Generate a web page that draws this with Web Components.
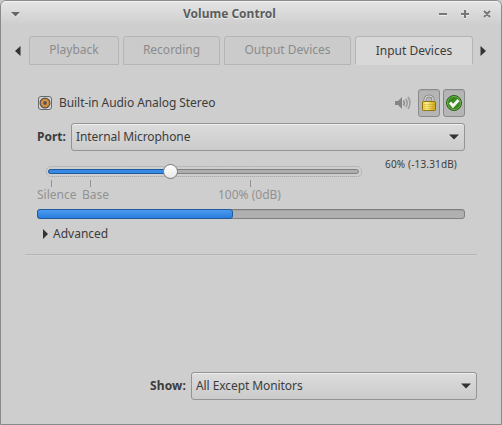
<!DOCTYPE html>
<html lang="en"><head><meta charset="utf-8"><title>Volume Control</title>
<style>
html,body{margin:0;width:502px;height:425px;overflow:hidden;background:#c9c9c9}
body{font:12px/16px "Noto Sans","Open Sans",sans-serif;color:#3c3c3c}
</style></head><body>
<volume-window></volume-window>
<script>
const define=(name,html)=>customElements.define(name,class extends HTMLElement{
  constructor(){super();this.attachShadow({mode:'open'}).innerHTML=html;}
});
define('title-bar',`<style>
:host{display:grid;grid-template-columns:172px auto 1fr;align-items:center;height:24px;padding:0 9px 0 10px;background:linear-gradient(#e4e4e4,#cecece);border-top:1px solid #f4f4f4;box-sizing:border-box;color:#5c5c5c}
b{text-shadow:0 1px #eee}
svg{display:block}.r{justify-self:end}
</style><svg width="10" height="8"><path d="M0 3h9L4.500 7.500z" fill="#f2f2f2"/><path d="M0 2h9L4.500 6.500z" fill="#666"/></svg>
<b><slot></slot></b>
<svg class="r" width="54" height="12"><g fill="none" stroke-width="2"><path stroke="#eee" d="M1 7h8M23 7h8M27 3v8M46 3.500l6 6M52 3.500l-6 6"/><path stroke="#777" d="M1 6h8M23 6h8M27 2v8M46 3l6 6M52 3l-6 6"/></g></svg>`);
define('tab-item',`<style>
:host{display:flex;box-sizing:border-box;height:29px;border:1px solid #b5b5b5;border-radius:3px 3px 0 0;align-items:center;justify-content:center;color:#8b8b8b;padding-bottom:1px;background:#cbcbcb;white-space:nowrap}
:host([active]){background:#d8d8d8;color:#3c3c3c;border-bottom-color:#d8d8d8;padding-bottom:0}
</style><slot></slot>`);
define('tab-strip',`<style>
:host{display:grid;grid-template-columns:13px 90px 97px 127px 118px 13px;column-gap:4px;padding:11px 0 0 11px;align-items:center}
svg{display:block}.l{justify-self:end;margin-right:4px}
.r{margin-left:3px}
</style><svg class="l" width="6" height="12"><path d="M5.500 1v10L0 6z" fill="#333"/></svg>
<slot></slot><svg class="r" width="6" height="12"><path d="M.5 1v10L6 6z" fill="#333"/></svg>`);
define('combo-box',`<style>
:host{display:flex;box-sizing:border-box;height:28px;border:1px solid #949494;border-radius:3px;background:linear-gradient(#dcdcdc,#cbcbcb);box-shadow:inset 0 1px #eee;align-items:center;justify-content:space-between;padding:0 5px 1px 4px;white-space:nowrap;letter-spacing:-.08px}
</style><span><slot></slot></span><svg width="10" height="6"><path d="M0 .5h10L5 5.5z" fill="#333"/></svg>`);
define('toggle-button',`<style>
:host{display:flex;box-sizing:border-box;width:22px;height:28px;border:1px solid #8a8a8a;border-radius:3px;background:#b5b5b5;box-shadow:inset 0 1px #aaa;align-items:center;justify-content:center}
</style><slot></slot>`);
define('volume-slider',`<style>
:host{display:block;width:316px;height:23px}svg{display:block;overflow:visible}
</style><svg width="316" height="23">
<defs><linearGradient id="k" x2="0" y2="1"><stop stop-color="#fff"/><stop offset="1" stop-color="#e8e8e8"/></linearGradient></defs>
<rect x=".5" y="1.5" width="315" height="10" rx="4" fill="none" stroke="#a0a0a0" stroke-dasharray="1 1"/>
<rect x="2.5" y="4.5" width="310" height="4" rx="2" fill="#adadad" stroke="#808080"/>
<path d="M124 4.5H4.5a2 2 0 0 0 0 4H124" fill="#368ae6" stroke="#1f5a9c"/>
<circle cx="124.5" cy="6.5" r="7" fill="url(#k)" stroke="#777"/>
<path d="M5.500 15v7M44.500 15v7M204.500 15v7" stroke="#929292"/></svg>`);
define('level-bar',`<style>
:host{display:block;box-sizing:border-box;height:10px;border:1px solid #808080;border-radius:3px;background:#b0b0b0;box-shadow:inset 0 1px #a2a2a2}
i{display:block;box-sizing:border-box;width:196px;height:10px;margin:-1px;border:1px solid #205a9e;border-radius:3px;background:linear-gradient(#4a9bf0,#2a7edb)}
</style><i></i>`);
define('device-card',`<style>
:host{display:block;margin:24px 24px 0;height:165px;border-bottom:1px solid #b5b5b5;box-shadow:0 1px #d2d2d2}
section{padding:0 12px}
.h{display:flex;height:28px;align-items:center;white-space:nowrap}
.h svg{display:block}.h .n{margin-left:7px;flex:1;letter-spacing:-.07px}
.h toggle-button+toggle-button{margin-left:3px}
.p{display:grid;grid-template-columns:34px 1fr;align-items:center;margin-top:6px}
.s{display:flex;padding:14px 8px 0 9px;justify-content:space-between}
.db{font-size:10px;line-height:12px;margin-top:-7px;white-space:nowrap;letter-spacing:.15px}
.m{display:flex;color:#929292;height:16px;margin-top:-1px;white-space:nowrap}
level-bar{margin-top:6px}
.a{display:flex;align-items:center;gap:5px;padding:7px 0 0 6px}
</style><section>
<div class="h"><svg width="15" height="14"><rect x="1.500" y=".5" width="13" height="13" rx="2.500" fill="#d8d8d8" stroke="#686868"/><circle cx="8" cy="7" r="4.900" fill="#e49a46" stroke="#555" stroke-width="1.200"/><circle cx="8" cy="7" r="3.600" fill="none" stroke="#b96f28" stroke-width=".6"/><circle cx="8" cy="7" r="1.900" fill="#555"/></svg>
<span class="n">Built-in Audio Analog Stereo</span>
<svg width="16" height="16" style="margin-right:7px" fill="none" stroke="#8c8c8c" stroke-width="1.500"><path d="M0 6h3l4-4v12L3 10H0z" fill="#858585" stroke="none"/><path d="M8.500 5.500q1.800 2.500 0 5"/><path d="M10.800 3.800q2.800 4.200 0 8.400" stroke="#979797"/><path d="M13 2q4 6 0 12" stroke="#9d9d9d"/></svg>
<toggle-button><svg width="16" height="18"><defs><linearGradient id="l"><stop stop-color="#e5c51c"/><stop offset=".3" stop-color="#fff193"/><stop offset="1" stop-color="#c9a10c"/></linearGradient></defs><path d="M4 9V6a4 4 0 0 1 8 0V9" fill="none" stroke="#858585" stroke-width="3"/><path d="M4 9V6a4 4 0 0 1 8 0V9" fill="none" stroke="#e0e0e0" stroke-width="1.200"/><rect x="1.500" y="7.500" width="13" height="9" rx=".8" fill="url(#l)" stroke="#927407"/><path d="M3 10.500h10M3 12.500h10M3 14.500h10" stroke="#b4930d" stroke-opacity=".35"/></svg></toggle-button>
<toggle-button><svg width="18" height="18"><circle cx="9" cy="9" r="7.500" fill="#39871d" stroke="#286312"/><circle cx="9" cy="9" r="6.500" fill="none" stroke="#7db866" stroke-width=".8"/><path d="M5 8.500l3 3.500 5.500-6" fill="none" stroke="#f5f5f5" stroke-width="3"/></svg></toggle-button></div>
<div class="p"><b>Port:</b><combo-box>Internal Microphone</combo-box></div>
<div class="s"><volume-slider></volume-slider><span class="db">60% (-13.31dB)</span></div>
<div class="m"><span style="width:45px">Silence</span><span style="width:136px">Base</span><span>100% (0dB)</span></div>
<level-bar></level-bar>
<div class="a"><svg width="5" height="10"><path d="M0 0v10l5-5z" fill="#333"/></svg><span>Advanced</span></div>
</section>`);
define('filter-row',`<style>
:host{display:grid;grid-template-columns:auto 286px;gap:5px;justify-content:end;align-items:center;padding:0 24px 24px 0;margin-top:auto}
b{letter-spacing:.15px}
</style><b>Show:</b><combo-box>All Except Monitors</combo-box>`);
define('volume-window',`<style>
:host{display:flex;flex-direction:column;box-sizing:border-box;width:502px;height:425px;border:1px solid #8a8a8a;border-radius:6px 6px 0 0;background:#cecece;overflow:hidden}
</style><title-bar>Volume Control</title-bar>
<tab-strip><tab-item>Playback</tab-item><tab-item>Recording</tab-item><tab-item>Output Devices</tab-item><tab-item active>Input Devices</tab-item></tab-strip>
<device-card></device-card><filter-row></filter-row>`);
</script></body></html>
